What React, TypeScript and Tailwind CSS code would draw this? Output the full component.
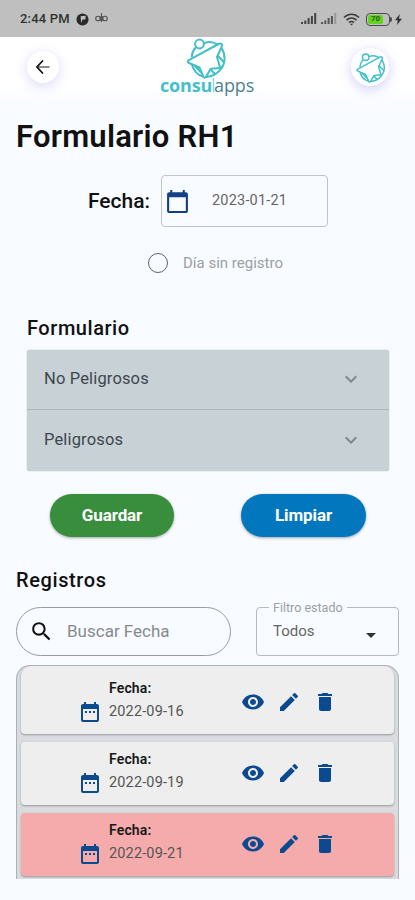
"use client";

import {
  MdArrowDropDown,
  MdCalendarToday,
  MdDateRange,
  MdDelete,
  MdEdit,
  MdExpandMore,
  MdRemoveRedEye,
  MdSearch,
} from "react-icons/md";

interface Registro {
  fecha: string;
  alerta: boolean;
}

const registros: Registro[] = [
  { fecha: "2022-09-16", alerta: false },
  { fecha: "2022-09-19", alerta: false },
  { fecha: "2022-09-21", alerta: true },
];

const secciones = ["No Peligrosos", "Peligrosos"];

// Brand mark: star figure inside a ring
function LogoMark({ className }: { className?: string }) {
  return (
    <svg
      viewBox="0 0 42 42"
      className={className}
      fill="none"
      stroke="#42bfc8"
      strokeWidth="2"
      strokeLinejoin="round"
      strokeLinecap="round"
    >
      <circle cx="14.5" cy="7" r="4.4" />
      <path d="M19.5 6C24 4.4 29 5.2 32.5 7.6" />
      <path d="M10.5 10.8C8.3 13 7.2 15.5 6.8 19.5" />
      <path d="M3.8 23.2L33.5 7C36 5.8 37.6 7 36.8 9.4L32 20L35.2 31C32 31.3 28 31.3 25.5 32L21 40C20 41 19 41 18.4 39.8L14.5 30.5L4 26C2.4 25.2 2.4 24 3.8 23.2Z" />
      <path d="M36.8 11.5C41 18.5 40.3 26.5 35.8 32.2C32 37 27 39.8 21 40" />
      <path d="M7 27.8C8.5 33.5 12.8 38 18 39.5" />
      <path d="M33 19L38.8 25M10 29L15.5 35M26 33L30 37" />
    </svg>
  );
}

function StatusBar() {
  return (
    <div className="flex h-[37px] items-center justify-between bg-[#bfbfbf] pl-5 pr-[13px] text-[#333]">
      <div className="flex items-center pt-px">
        <span className="w-[50px] whitespace-nowrap text-[13px] font-medium tracking-[0.2px]">2:44 PM</span>
        <svg viewBox="0 0 14 14" className="ml-[6px] size-[13px]">
          <circle cx="7" cy="7" r="6.5" fill="#292929" />
          <path d="M5 3.5L10.5 3L10 7H7L5.5 11Z" fill="#bfbfbf" />
        </svg>
        <svg viewBox="0 0 13 10" className="-mt-[2px] ml-[6px] h-[10px] w-[13px]" fill="none" stroke="#555" strokeWidth="1.1">
          <circle cx="3" cy="5.5" r="2.3" />
          <circle cx="10" cy="5.5" r="2.3" />
          <path d="M5.3 3V8M7.7 3V8M6.5 0V9" />
        </svg>
      </div>
      <div className="flex items-center pt-px">
        <svg viewBox="0 0 16 12" className="h-3 w-4" fill="#444">
          <path d="M0 9h2v2H0zM3.3 7.5h2V11h-2zM6.6 5h2v6h-2zM9.9 3h2v8h-2zM13.2 0h2v11h-2z" />
        </svg>
        <svg viewBox="0 0 16 12" className="ml-1 h-3 w-4" fill="#555">
          <path d="M0 9h2v2H0zM3.3 7.5h2V11h-2zM6.6 5h2v6h-2zM9.9 3h2v8h-2z" />
          <path d="M13.2 0h2v11h-2z" fill="#999" />
        </svg>
        <svg viewBox="0 0 17 13" className="ml-[6px] h-[13px] w-[17px]" fill="none" stroke="#3b3b3b" strokeWidth="1.6">
          <path d="M1 4.5C5.5.2 11.5.2 16 4.5M3.5 7.2c3-2.9 7-2.9 10 0M6 9.7c1.5-1.4 3.5-1.4 5 0" />
          <path d="M8.5 12.5L7 10.7h3z" fill="#3b3b3b" stroke="none" />
        </svg>
        <div className="ml-[6px] flex h-[13px] w-[24px] items-center rounded-[4px] border-[1.5px] border-[#4b4b4b] p-px">
          <div className="flex h-full w-[15px] items-center justify-center rounded-[2px] bg-[#63d321] text-[8px] font-bold leading-none text-[#2b5d14]">
            70
          </div>
        </div>
        <div className="h-[5px] w-[2px] rounded-r bg-[#4b4b4b]" />
        <svg viewBox="0 0 7 11" className="ml-[3px] h-[11px] w-[7px]" fill="#333">
          <path d="M4.8 0L0 6.2h2.8L2 11l5-6.3H4z" />
        </svg>
      </div>
    </div>
  );
}

function Header() {
  return (
    <header className="flex h-[72px] items-start justify-between bg-linear-to-b from-white from-65% to-[#f8fbff] pl-[27px] pr-[26px]">
      <button
        aria-label="Volver"
        className="mt-[14px] flex size-8 items-center justify-center rounded-full bg-white shadow-[0_3px_12px_1px_rgba(125,115,235,0.24)]"
      >
        <svg viewBox="0 0 14 14" className="size-[14px]" fill="none" strokeLinecap="round">
          <path d="M2 7H13" stroke="#666" strokeWidth="1.5" />
          <path d="M6.5 1L1 7L6.5 13" stroke="#111" strokeWidth="1.7" />
        </svg>
      </button>
      <div className="ml-[4px] flex w-[96px] flex-col items-center">
        <LogoMark className="ml-[-3px] size-[42px]" />
        <div className="-mt-[6px] whitespace-nowrap font-['Open_Sans',sans-serif] text-[18px] leading-[24px] tracking-[-0.15px] text-[#4d8390]">
          <span className="font-bold text-[#45c0ca]">consu</span>
          <span className="-ml-px font-light text-[#62c8d0]">l</span>
          <span className="-ml-px">apps</span>
        </div>
      </div>
      <div className="mt-[11px] flex size-[38px] items-center justify-center rounded-full bg-white shadow-[0_3px_12px_1px_rgba(125,115,235,0.3)]">
        <LogoMark className="size-[31px]" />
      </div>
    </header>
  );
}

function RegistroCard({ registro, first }: { registro: Registro; first: boolean }) {
  return (
    <div
      className={`flex items-end rounded-[4px] pl-[57px] text-[#0b4a8f] shadow-[0_1px_2px_rgba(0,0,0,0.3)] ${
        first ? "h-[68px] rounded-t-[10px]" : "h-[63px]"
      } ${registro.alerta ? "bg-[#f5abab]" : "bg-[#eeeeee]"}`}
    >
      <MdDateRange className="mb-[10px] size-6" />
      <div className="mb-[10px] ml-[7px] w-[126px] text-[14.5px] leading-6 tracking-[0.15px]">
        <div className="text-[14px] font-semibold text-[#181818]">Fecha:</div>
        <div className="text-[#555]">{registro.fecha}</div>
      </div>
      <div className="mb-5 flex items-center gap-3 pl-[6px]">
        <MdRemoveRedEye className="size-6" />
        <MdEdit className="size-6" />
        <MdDelete className="size-6" />
      </div>
    </div>
  );
}

export default function App() {
  return (
    <div className="h-[900px] w-[415px] overflow-hidden bg-[#f8fbff] font-[Roboto,sans-serif] text-[#111]">
      <StatusBar />
      <Header />

      <main className="px-4">
        <h1 className="mt-2 text-[31px] font-semibold leading-10 tracking-[0.25px]">Formulario RH1</h1>

        {/* Date field */}
        <div className="mt-[18px] flex items-center pl-[72px]">
          <span className="w-[73px] pt-[2px] text-[21px] font-medium">Fecha:</span>
          <div className="flex h-[52px] w-[167px] items-center rounded-[4px] border border-[#bfc4c7] pl-[3px]">
            <MdCalendarToday className="size-[25px] text-[#123f86]" />
            <span className="ml-[22px] text-[14.5px] tracking-[0.2px] text-[#666]">2023-01-21</span>
          </div>
        </div>

        <label className="mt-[24px] flex h-6 items-center pl-[132px]">
          <span className="size-5 rounded-full border-[1.5px] border-[#606060]" />
          <span className="ml-[15px] text-[15px] text-[#9aa0a5]">Día sin registro</span>
        </label>

        {/* Form sections */}
        <section className="mt-[40px] px-[11px]">
          <h2 className="text-[20px] font-medium leading-[26px] tracking-[0.55px]">Formulario</h2>
          <div className="mt-[9px] w-[362px] rounded-[2px] bg-[#c8d1d6] shadow-[0_0_2px_rgba(0,0,0,0.2)]">
            {secciones.map((seccion, i) => (
              <div
                key={seccion}
                className={`flex items-center justify-between pl-[17px] pr-[26px] text-[16.5px] tracking-[0.15px] text-[#3e474d] ${
                  i === 0 ? "h-[60px] border-b border-[#afb9be]" : "h-[61px]"
                }`}
              >
                {seccion}
                <MdExpandMore className="-mt-[2px] size-6 text-[#7e8a90]" />
              </div>
            ))}
          </div>
        </section>

        <div className="mt-[23px] flex gap-[67px] pl-[34px] text-[17px] font-bold tracking-[-0.1px] text-white">
          <button className="h-[43px] w-[124px] rounded-full bg-[#388e3c] shadow-[0_1px_3px_rgba(0,0,0,0.35)]">
            Guardar
          </button>
          <button className="h-[43px] w-[125px] rounded-full bg-[#0277bd] shadow-[0_1px_3px_rgba(0,0,0,0.35)]">
            Limpiar
          </button>
        </div>

        <h2 className="mt-[30px] text-[20px] font-medium leading-[26px] tracking-[0.6px]">Registros</h2>

        {/* Search and filter */}
        <div className="mt-[14px] flex justify-between">
          <div className="flex h-[49px] w-[215px] items-center rounded-full border border-[#9b9b9b] pl-[12px]">
            <MdSearch className="size-[25px] text-[#111]" />
            <span className="ml-[13px] text-[17px] text-[#858a8d]">Buscar Fecha</span>
          </div>
          <div className="relative flex h-[49px] w-[143px] items-center justify-between rounded-[4px] border border-[#b5babd] pl-[16px] pr-[16px]">
            <span className="absolute -top-[8px] left-[12px] bg-[#f8fbff] px-1 text-[12.5px] leading-4 text-[#9a9fa3]">
              Filtro estado
            </span>
            <span className="text-[15px] text-[#666]">Todos</span>
            <MdArrowDropDown className="-mr-px mt-[7px] size-6 text-[#333]" />
          </div>
        </div>

        {/* Records list */}
        <div className="mt-[9px] h-[214px] overflow-hidden rounded-t-[14px] border border-b-0 border-[#aeb1b4] bg-[#d9dbdf] px-1">
          <div className="flex flex-col gap-2">
            {registros.map((registro, i) => (
              <RegistroCard key={registro.fecha} registro={registro} first={i === 0} />
            ))}
          </div>
        </div>
      </main>
    </div>
  );
}
